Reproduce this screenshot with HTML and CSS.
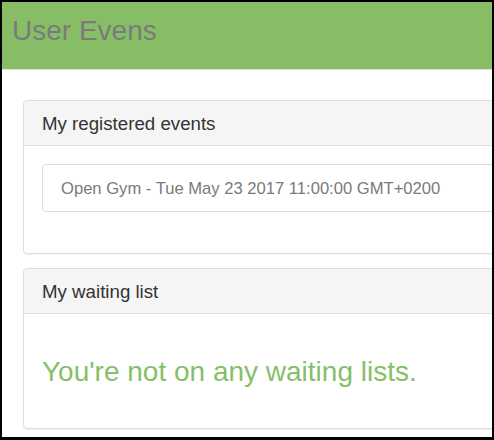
FILE: index.html
```html
<!DOCTYPE html>
<html>
<head>
<meta charset="utf-8">
<link rel="stylesheet" href="styles.css">
</head>
<body>
<div class="frame">
  <header class="topbar">
    <h1 class="brand">User Evens</h1>
  </header>
  <main class="content">
    <section class="panel">
      <div class="panel-heading">My registered events</div>
      <div class="panel-body">
        <ul class="list-group">
          <li class="list-item">Open Gym - Tue May 23 2017 11:00:00 GMT+0200</li>
        </ul>
      </div>
    </section>
    <section class="panel">
      <div class="panel-heading">My waiting list</div>
      <div class="panel-body">
        <h3 class="empty">You're not on any waiting lists.</h3>
      </div>
    </section>
  </main>
</div>
</body>
</html>
```

FILE: styles.css
```css
html, body {
  margin: 0;
  padding: 0;
  background: #000;
}
body {
  font-family: "Liberation Sans", Arial, sans-serif;
}
.frame {
  box-sizing: border-box;
  width: 494px;
  height: 440px;
  border-style: solid;
  border-color: #000;
  border-width: 2px 2px 3px 2px;
  background: #fff;
  overflow: hidden;
}
.topbar {
  box-sizing: border-box;
  height: 68px;
  padding: 13px 10px 0;
  background: #87be65;
  border-bottom: 1px solid #e3e3e3;
}
.brand {
  margin: 0;
  font-size: 28px;
  line-height: 32px;
  font-weight: normal;
  color: #7b7b7b;
}
.content {
  padding: 30px 0 0 21px;
  width: 560px;
}
.panel {
  border: 1px solid #dddddd;
  border-radius: 4px;
  margin-bottom: 14px;
  box-shadow: 0 1px 1px rgba(0,0,0,0.05);
}
.panel-heading {
  box-sizing: border-box;
  height: 45px;
  padding: 12px 18px 0;
  font-size: 18.7px;
  line-height: 21px;
  color: #333;
  background: #f5f5f5;
  border-bottom: 1px solid #dddddd;
  border-radius: 3px 3px 0 0;
}
.panel-body {
  padding: 18px;
}
.list-group {
  list-style: none;
  margin: 0 0 23px;
  padding: 0;
}
.list-item {
  box-sizing: border-box;
  height: 48px;
  padding: 12px 18px 0;
  border: 1px solid #dddddd;
  border-radius: 4px;
  font-size: 16.6px;
  line-height: 23.7px;
  color: #7a7a7a;
}
.empty {
  margin: 24px 0 23px;
  font-size: 28px;
  line-height: 31px;
  font-weight: normal;
  color: #85bf68;
}
```
